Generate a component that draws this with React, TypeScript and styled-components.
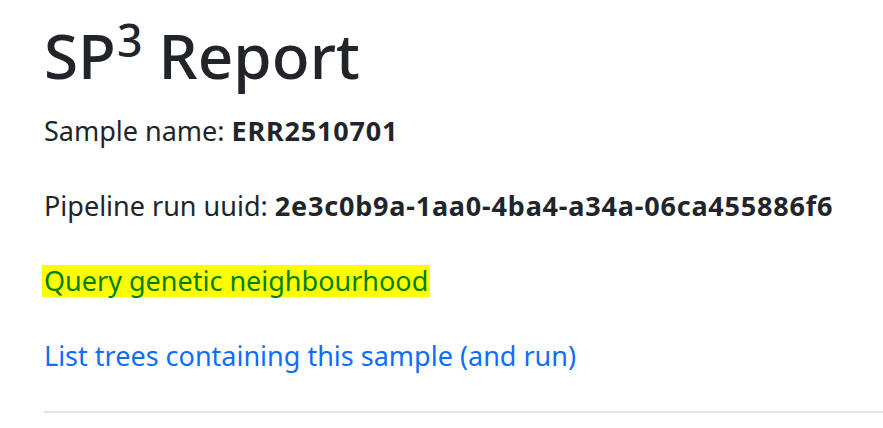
import React from "react";
import styled, { createGlobalStyle } from "styled-components";

const Global = createGlobalStyle`
  html, body { margin: 0; padding: 0; background: #fff; }
  body {
    font-family: "Noto Sans", "Open Sans", sans-serif;
    color: #212529;
    font-size: 27px;
    line-height: 40px;
    overflow: hidden;
  }
`;

const Page = styled.main`
  display: flex;
  flex-direction: column;
  padding: 19px 0 0 44px;
`;

const Title = styled.h1`
  margin: 0 0 20px 0;
  font-size: 62px;
  font-weight: 500;
  line-height: 72px;
`;

const Sup = styled.sup`
  font-size: 0.72em;
  line-height: 0;
  position: relative;
  top: -0.5em;
  vertical-align: baseline;
  margin-left: 1px;
`;

const Para = styled.p`
  margin: 0 0 35px 0;
`;

const Strong = styled.strong`
  font-weight: 700;
  letter-spacing: 0.8px;
`;

const Link = styled.a<{ $highlight?: boolean }>`
  color: ${(p) => (p.$highlight ? "#008000" : "#0d6efd")};
  background: ${(p) =>
    p.$highlight ? "linear-gradient(#ffff00, #ffff00) center / 100% 32px no-repeat" : "transparent"};
  padding: 0 2px;
  margin-left: -2px;
  text-decoration: none;
`;

const Rule = styled.hr`
  margin: 0;
  border: 0;
  border-top: 2px solid #e3e3e3;
`;

export default function App() {
  return (
    <>
      <Global />
      <Page>
        <Title>
          SP<Sup>3</Sup> Report
        </Title>
        <Para>
          Sample name: <Strong>ERR2510701</Strong>
        </Para>
        <Para>
          Pipeline run uuid: <Strong>2e3c0b9a-1aa0-4ba4-a34a-06ca455886f6</Strong>
        </Para>
        <Para>
          <Link href="#" $highlight>
            Query genetic neighbourhood
          </Link>
        </Para>
        <Para>
          <Link href="#">List trees containing this sample (and run)</Link>
        </Para>
        <Rule />
      </Page>
    </>
  );
}
